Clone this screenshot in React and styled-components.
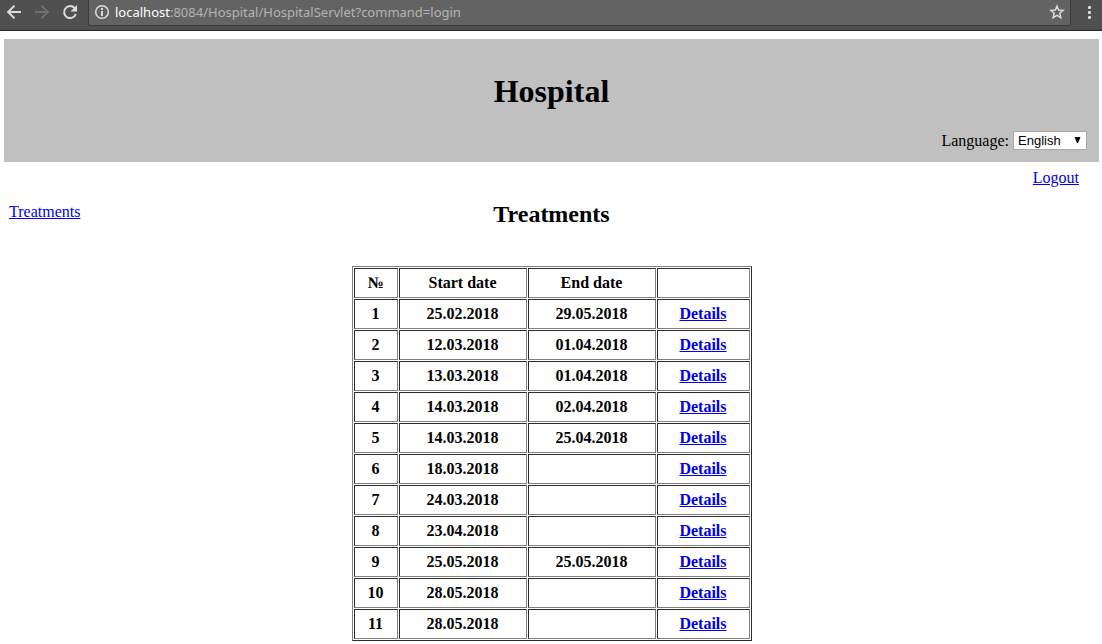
import React from 'react';
import styled, { createGlobalStyle } from 'styled-components';

const GlobalStyle = createGlobalStyle`
  body {
    margin: 0;
    background: #fff;
    color: #000;
    font: 16px/18px "Liberation Serif", "Times New Roman", serif;
  }
  *, *::before, *::after { box-sizing: border-box; }
`;

const Toolbar = styled.div`
  display: flex;
  height: 31px;
  background: #505050;
  border-bottom: 1px solid #282828;
`;

const NavButtons = styled.div`
  display: flex;
  flex: none;
  width: 88px;
  height: 24px;
  padding-left: 4px;
  gap: 8px;
  align-items: center;
`;

const IconButton = styled.button`
  display: flex;
  align-items: center;
  justify-content: center;
  flex: none;
  width: 20px;
  height: 24px;
  padding: 0;
  border: 0;
  background: none;
  color: ${(p) => (p.disabled ? '#717171' : '#dcdcdc')};
`;

const AddressBar = styled.div`
  display: flex;
  flex: 1;
  min-width: 0;
  height: 26px;
  padding: 0 3px 1px;
  align-items: center;
  background: #636363;
  border: 1px solid #3a3a3a;
  border-top: 0;
  border-radius: 0 0 2px 2px;
`;

const Url = styled.div`
  flex: 1;
  min-width: 0;
  overflow: hidden;
  padding-left: 3px;
  white-space: nowrap;
  color: #b4b4b4;
  font: 13px/24px "Noto Sans", sans-serif;
`;

const Host = styled.span`
  color: #fff;
`;

const MenuSlot = styled.div`
  flex: none;
  width: 31px;
  padding-left: 8px;
`;

const Page = styled.div`
  padding: 8px 3px 3px 4px;
`;

const Banner = styled.header`
  padding: 34px 12px 12px;
  background: #c0c0c0;
`;

const SiteTitle = styled.h1`
  margin: 0 0 22px;
  text-align: center;
  font-size: 32px;
  line-height: 36px;
`;

const LanguageRow = styled.div`
  display: flex;
  justify-content: flex-end;
  align-items: center;
  gap: 4px;
`;

const SelectWrap = styled.div`
  position: relative;
  display: flex;
`;

const Select = styled.select`
  appearance: none;
  width: 74px;
  height: 19px;
  padding: 0 16px 0 4px;
  border: 1px solid #a9a9a9;
  border-radius: 0;
  background: #fff;
  color: #000;
  font: 13px/17px "Liberation Sans", Arial, sans-serif;
`;

const Arrow = styled.svg`
  position: absolute;
  top: 6px;
  right: 6px;
  pointer-events: none;
`;

const AccountRow = styled.div`
  display: flex;
  justify-content: flex-end;
  padding: 7px 20px 0 0;
`;

const Link = styled.a`
  color: #0000ee;
  text-decoration: underline;
`;

const Columns = styled.div`
  display: grid;
  grid-template-columns: 1fr auto 1fr;
  padding-top: 13px;
`;

const Sidebar = styled.nav`
  padding: 3px 0 0 5px;
`;

const SectionTitle = styled.h2`
  margin: 0 0 38px;
  text-align: center;
  font-size: 24px;
  line-height: 28px;
`;

const Table = styled.table`
  width: 400px;
  table-layout: fixed;
  border-collapse: separate;
  border-spacing: 1px;
  border: 1px solid;
  border-color: #808080 #2c2c2c #2c2c2c #808080;
`;

const Col = styled.col`
  width: ${(p) => p.$width}px;
`;

const Cell = styled.th`
  height: 30px;
  padding: 0;
  border: 1px solid;
  border-color: #2c2c2c #808080 #808080 #2c2c2c;
  text-align: center;
  vertical-align: middle;
`;

const treatments = [
  ['25.02.2018', '29.05.2018'],
  ['12.03.2018', '01.04.2018'],
  ['13.03.2018', '01.04.2018'],
  ['14.03.2018', '02.04.2018'],
  ['14.03.2018', '25.04.2018'],
  ['18.03.2018', ''],
  ['24.03.2018', ''],
  ['23.04.2018', ''],
  ['25.05.2018', '25.05.2018'],
  ['28.05.2018', ''],
  ['28.05.2018', ''],
];

const BackIcon = () => (
  <svg width="16" height="16" viewBox="0 0 16 16" fill="none" stroke="currentColor" strokeWidth="2">
    <path d="M15 8H2.5M8.5 1.6 2.1 8l6.4 6.4" />
  </svg>
);

const ForwardIcon = () => (
  <svg width="16" height="16" viewBox="0 0 16 16" fill="none" stroke="currentColor" strokeWidth="2">
    <path d="M1 8h12.5M7.5 1.6 13.9 8l-6.4 6.4" />
  </svg>
);

const ReloadIcon = () => (
  <svg width="16" height="16" viewBox="0 0 16 16">
    <path d="M12.7 4.2A6 6 0 1 0 13.8 10" fill="none" stroke="currentColor" strokeWidth="2" />
    <path d="M15 1v6.5H8.5z" fill="currentColor" />
  </svg>
);

const InfoIcon = () => (
  <svg width="16" height="16" viewBox="0 0 16 16">
    <circle cx="8" cy="8" r="6.3" fill="none" stroke="currentColor" strokeWidth="1.5" />
    <path d="M7 4h2v2H7zM7 7h2v5H7z" fill="currentColor" />
  </svg>
);

const StarIcon = () => (
  <svg width="16" height="16" viewBox="0 0 16 16" fill="none" stroke="currentColor" strokeWidth="1.5">
    <path d="M8 2.2 9.7 6l4.4.4-3.3 2.9 1 4.3L8 11.3l-3.8 2.3 1-4.3-3.3-2.9L6.3 6z" />
  </svg>
);

const MenuIcon = () => (
  <svg width="16" height="16" viewBox="0 0 16 16" fill="currentColor">
    <rect x="7" y="2" width="3" height="3" rx="1" />
    <rect x="7" y="7" width="3" height="3" rx="1" />
    <rect x="7" y="12" width="3" height="3" rx="1" />
  </svg>
);

export default function App() {
  return (
    <>
      <GlobalStyle />
      <Toolbar>
        <NavButtons>
          <IconButton aria-label="Back"><BackIcon /></IconButton>
          <IconButton aria-label="Forward" disabled><ForwardIcon /></IconButton>
          <IconButton aria-label="Reload"><ReloadIcon /></IconButton>
        </NavButtons>
        <AddressBar>
          <IconButton aria-label="Site information"><InfoIcon /></IconButton>
          <Url>
            <Host>localhost</Host>:8084/Hospital/HospitalServlet?command=login
          </Url>
          <IconButton aria-label="Bookmark this page"><StarIcon /></IconButton>
        </AddressBar>
        <MenuSlot>
          <IconButton aria-label="Menu"><MenuIcon /></IconButton>
        </MenuSlot>
      </Toolbar>
      <Page>
        <Banner>
          <SiteTitle>Hospital</SiteTitle>
          <LanguageRow>
            <label htmlFor="language">Language:</label>
            <SelectWrap>
              <Select id="language" defaultValue="en">
                <option value="en">English</option>
              </Select>
              <Arrow width="7" height="6" viewBox="0 0 7 6" aria-hidden="true">
                <path d="M.5 0h6L4 6H3z" fill="#000" />
              </Arrow>
            </SelectWrap>
          </LanguageRow>
        </Banner>
        <AccountRow>
          <Link href="#logout">Logout</Link>
        </AccountRow>
        <Columns>
          <Sidebar>
            <Link href="#treatments">Treatments</Link>
          </Sidebar>
          <main>
            <SectionTitle>Treatments</SectionTitle>
            <Table>
              <colgroup>
                <Col $width={44} />
                <Col $width={128} />
                <Col $width={128} />
                <Col $width={93} />
              </colgroup>
              <thead>
                <tr>
                  <Cell scope="col">№</Cell>
                  <Cell scope="col">Start date</Cell>
                  <Cell scope="col">End date</Cell>
                  <Cell as="td" />
                </tr>
              </thead>
              <tbody>
                {treatments.map(([start, end], i) => (
                  <tr key={i}>
                    <Cell scope="row">{i + 1}</Cell>
                    <Cell>{start}</Cell>
                    <Cell>{end}</Cell>
                    <Cell>
                      <Link href={`#details-${i + 1}`}>Details</Link>
                    </Cell>
                  </tr>
                ))}
              </tbody>
            </Table>
          </main>
        </Columns>
      </Page>
    </>
  );
}
